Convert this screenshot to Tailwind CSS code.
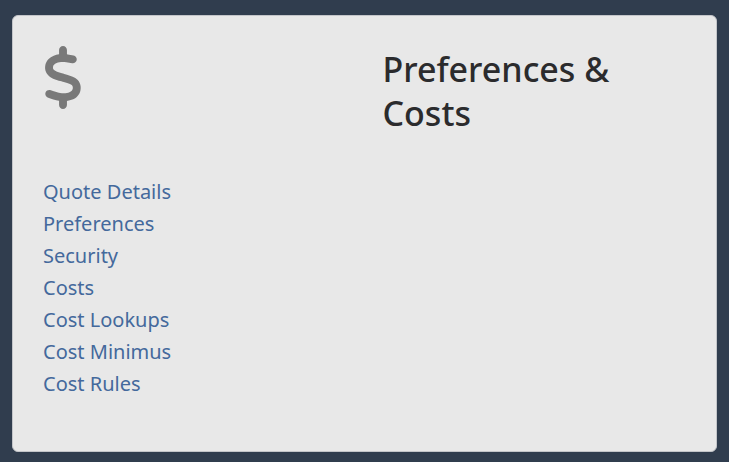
<!DOCTYPE html>
<html lang="en">
<head>
  <meta charset="UTF-8">
  <meta name="viewport" content="width=device-width, initial-scale=1">
  <title>Preferences &amp; Costs</title>
  <script src="https://cdn.jsdelivr.net/npm/@tailwindcss/browser@4"></script>
</head>
<body class="bg-[#303d4e] px-3 pt-[15px] pb-[10px] font-['Segoe_UI','Noto_Sans','Open_Sans',sans-serif]">
  <main class="rounded-md border border-[#c3c5c9] bg-[#e8e8e8] px-[30px] pt-[30px] pb-[51px]">
    <div class="grid grid-cols-2 gap-9">
      <svg class="h-[63px] w-10 fill-[#797979]" viewBox="0 0 320 512" aria-hidden="true">
        <path d="M160 0c17.7 0 32 14.3 32 32V67.7c1.6 .2 3.1 .4 4.7 .7c.4 .1 .7 .1 1.1 .2l48 8.8c17.4 3.2 28.9 19.9 25.7 37.2s-19.9 28.9-37.2 25.7l-47.5-8.7c-31.3-4.6-58.9-1.5-78.3 6.2s-27.2 18.3-29 28.1c-2 10.7-.5 16.7 1.2 20.4c1.8 3.9 5.5 8.3 12.8 13.2c16.3 10.7 41.3 17.7 73.7 26.3l2.9 .8c28.6 7.6 63.6 16.8 89.6 33.8c14.2 9.3 27.6 21.9 35.9 39.5c8.5 17.9 10.3 37.9 6.4 59.2c-6.9 38-33.1 63.4-65.6 76.7c-13.7 5.6-28.6 9.2-44.4 11V480c0 17.7-14.3 32-32 32s-32-14.3-32-32V445.1c-.4-.1-.9-.1-1.3-.2l-.2 0 0 0c-24.4-3.8-64.5-14.3-91.5-26.3c-16.1-7.2-23.4-26.1-16.2-42.2s26.1-23.4 42.2-16.2c20.9 9.3 55.3 18.5 75.2 21.6c31.9 4.7 58.2 2 76-5.3c16.9-6.9 24.6-16.9 26.8-28.9c1.9-10.6 .4-16.7-1.3-20.4c-1.9-4-5.6-8.4-13-13.3c-16.4-10.7-41.5-17.7-74-26.3l-2.8-.7c-28.5-7.5-63.4-16.8-89.5-33.7c-14.2-9.3-27.5-22-35.8-39.6c-8.4-17.9-10.1-37.9-6.1-59.2C23.7 116 52.3 91.2 84.8 78.3c13.3-5.3 27.9-8.9 43.2-11V32c0-17.7 14.3-32 32-32z"/>
      </svg>
      <h2 class="pt-px text-[34px] leading-11 font-medium text-[#2b2b2d]">Preferences &amp; Costs</h2>
    </div>

    <ul class="mt-[41px] text-[20px] leading-8 text-[#44699c]">
      <li><a href="#" class="hover:underline">Quote Details</a></li>
      <li><a href="#" class="hover:underline">Preferences</a></li>
      <li><a href="#" class="hover:underline">Security</a></li>
      <li><a href="#" class="hover:underline">Costs</a></li>
      <li><a href="#" class="hover:underline">Cost Lookups</a></li>
      <li><a href="#" class="hover:underline">Cost Minimus</a></li>
      <li><a href="#" class="hover:underline">Cost Rules</a></li>
    </ul>
  </main>
</body>
</html>
